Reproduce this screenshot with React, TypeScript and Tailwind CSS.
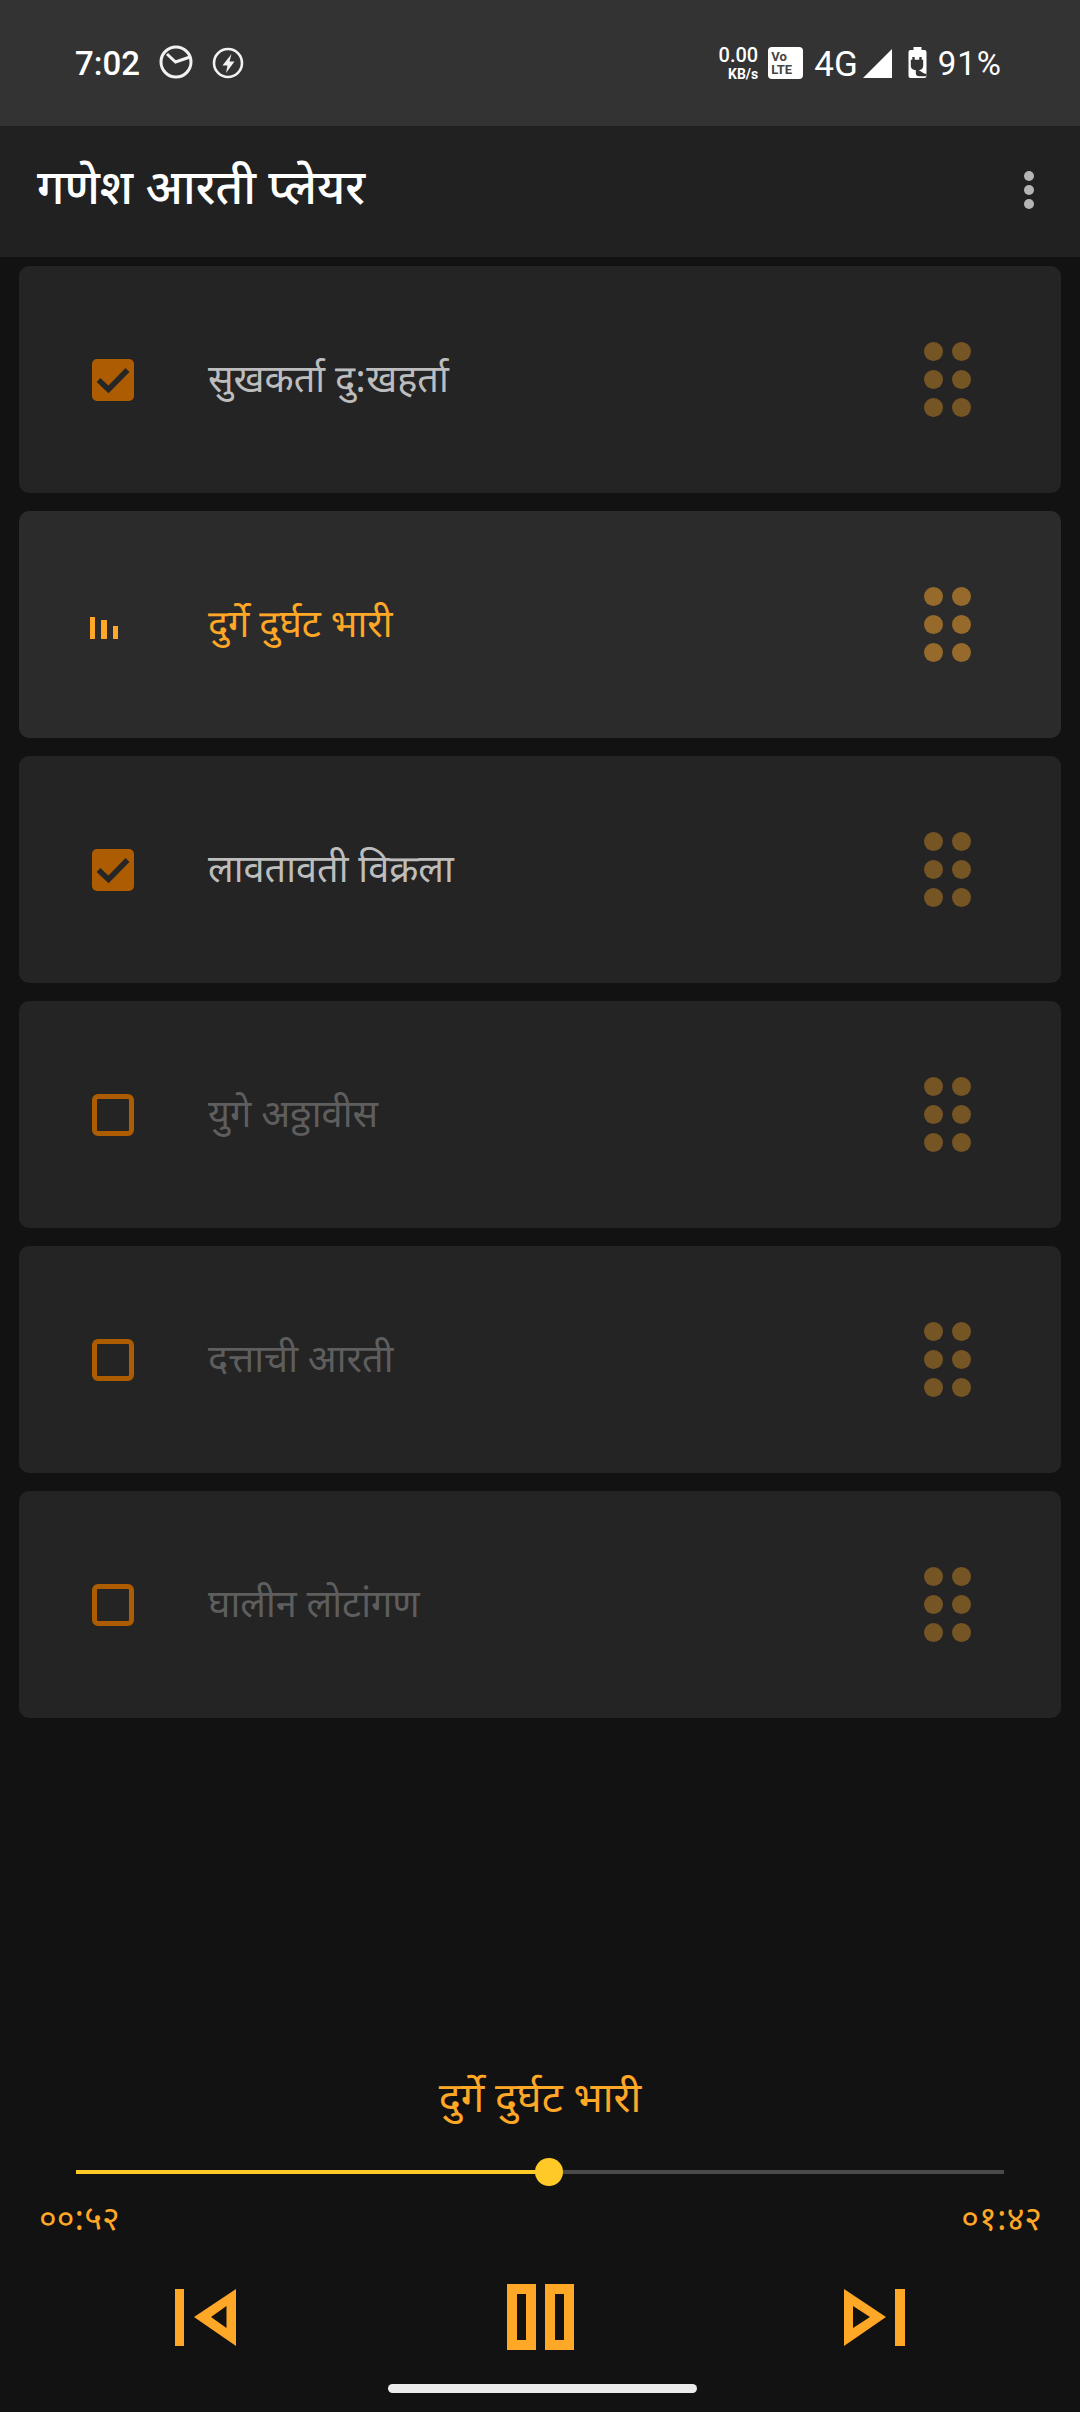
import React from "react";

const DEV = "font-['Noto_Sans_Devanagari','Noto_Sans','Roboto',sans-serif]";

const songs = [
  { name: "सुखकर्ता दु:खहर्ता", state: "done" },
  { name: "दुर्गे दुर्घट भारी", state: "playing" },
  { name: "लावतावती विक्रला", state: "done" },
  { name: "युगे अठ्ठावीस", state: "todo" },
  { name: "दत्ताची आरती", state: "todo" },
  { name: "घालीन लोटांगण", state: "todo" },
];

function Grip({ active }: { active: boolean }) {
  return (
    <div className="grid grid-cols-2 gap-x-[9px] gap-y-[9px] w-[47px] mr-[90px]">
      {[0, 1, 2, 3, 4, 5].map((i) => (
        <div key={i} className={`w-[19px] h-[19px] rounded-full ${active ? "bg-[#966A2B]" : "bg-[#765524]"}`} />
      ))}
    </div>
  );
}

function Lead({ state }: { state: string }) {
  if (state === "playing") {
    return (
      <div className="w-[42px] h-[42px] flex items-end gap-[6px] -ml-[2px] mr-[2px] mt-[4px]">
        <div className="w-[5px] h-[22px] bg-[#FFA726] mb-[9px]" />
        <div className="w-[6px] h-[19px] bg-[#FFA726] mb-[9px]" />
        <div className="w-[5px] h-[13px] bg-[#FFA726] mb-[9px]" />
      </div>
    );
  }
  if (state === "done") {
    return (
      <div className="w-[42px] h-[42px] rounded-[5px] bg-[#AD5C02] flex items-center justify-center">
        <svg width="34" height="28" viewBox="0 0 34 28" fill="none">
          <path d="M2.5 14 L12.5 23.5 L31.5 4" stroke="#262626" strokeWidth="5.5" />
        </svg>
      </div>
    );
  }
  return <div className="w-[42px] h-[42px] rounded-[6px] border-[5px] border-[#AD5C02]" />;
}

function Row({ name, state }: { name: string; state: string }) {
  const playing = state === "playing";
  const color = playing ? "text-[#FFA726]" : state === "done" ? "text-[#BDBDBD]" : "text-[#5E5E5E]";
  return (
    <div className={`h-[227px] rounded-[10px] flex items-center pl-[73px] shrink-0 ${playing ? "bg-[#2B2B2B]" : "bg-[#242424]"}`}>
      <Lead state={state} />
      <div className={`ml-[74px] flex-1 text-[37.9px] leading-[50px] pt-[6px] ${DEV} ${color}`}>{name}</div>
      <Grip active={playing} />
    </div>
  );
}

export default function App() {
  return (
    <div className="w-[1080px] h-[2412px] bg-[#121212] flex flex-col relative overflow-hidden font-['Roboto',sans-serif]">
      {/* status bar */}
      <div className="h-[126px] shrink-0 bg-[#333333] flex items-start pt-[45px] pl-[75px] pr-[78px] text-white">
        <span className="text-[33px] leading-[36px] mt-[1px] font-medium">7:02</span>
        <svg className="ml-[19px]" width="34" height="34" viewBox="0 0 34 34" fill="none" stroke="#F2F2F2" strokeWidth="3">
          <circle cx="17" cy="17" r="15" />
          <path d="M8 9 L16.5 17 L31 12" />
        </svg>
        <svg className="ml-[19px] mt-[2px]" width="32" height="32" viewBox="0 0 32 32" fill="none">
          <circle cx="16" cy="16" r="14" stroke="#F2F2F2" strokeWidth="2.6" />
          <path d="M19.5 7 L10.5 18.5 H15.5 L14 26 L22.5 14.5 H17.5 Z" fill="#F2F2F2" />
        </svg>
        <div className="ml-auto flex items-start">
          <div className="flex flex-col items-end mr-[10px]">
            <span className="text-[20px] leading-[20px] font-medium">0.00</span>
            <span className="text-[14px] leading-[16px] font-bold mt-[1px]">KB/s</span>
          </div>
          <div className="w-[35px] h-[32px] mt-[2px] rounded-[4px] bg-white text-[#444444] text-[13px] leading-[13px] font-bold pl-[3px] pt-[3px]">
            <div>Vo</div>
            <div>LTE</div>
          </div>
          <span className="ml-[11px] mt-[1px] text-[35px] leading-[38px]">4G</span>
          <svg className="ml-[5px] mt-[4px]" width="29" height="29" viewBox="0 0 29 29">
            <path d="M29 0 V29 H0 Z" fill="#FFFFFF" />
          </svg>
          <svg className="ml-[16px] mt-[2px]" width="19" height="31" viewBox="0 0 18 31">
            <path d="M5 0 H13 V3 H16 Q18 3 18 5 V29 Q18 31 16 31 H2 Q0 31 0 29 V5 Q0 3 2 3 H5 Z" fill="#FFFFFF" />
            <path d="M5 10 V14 M12 10 V14 M3.5 14 H13.5 V19 Q13.5 22 8.5 22 Q3.5 22 3.5 19 Z M8.5 22 V26 Q8.5 28 11 28 H18" stroke="#333333" strokeWidth="2.4" fill="#333333" />
          </svg>
          <span className="ml-[11px] mt-[1px] text-[33px] leading-[36px] tracking-[1px]">91%</span>
        </div>
      </div>

      {/* app bar */}
      <div className="h-[131px] shrink-0 bg-[#212121] flex items-center pl-[37px] pr-[46px]">
        <span className={`text-[47.4px] leading-[60px] font-medium text-white pt-[3px] ${DEV}`}>गणेश आरती प्लेयर</span>
        <div className="ml-auto flex flex-col gap-[4px] -mt-[3px]">
          <div className="w-[10px] h-[10px] rounded-full bg-[#B5B5B5]" />
          <div className="w-[10px] h-[10px] rounded-full bg-[#B5B5B5]" />
          <div className="w-[10px] h-[10px] rounded-full bg-[#B5B5B5]" />
        </div>
      </div>

      {/* list */}
      <div className="flex flex-col gap-[18px] pt-[9px] px-[19px]">
        {songs.map((s) => (
          <Row key={s.name} name={s.name} state={s.state} />
        ))}
      </div>

      {/* player */}
      <div className="mt-auto flex flex-col items-center pb-[62px]">
        <div className={`text-[41.6px] leading-[54px] pt-[2px] text-[#FFA726] ${DEV}`}>दुर्गे दुर्घट भारी</div>
        <div className="mt-[41px] w-[928px] h-[4px] bg-[#4A4A4A] relative">
          <div className="h-full w-[473px] bg-[#FFCA28]" />
          <div className="absolute left-[459px] -top-[12px] w-[28px] h-[28px] rounded-full bg-[#FFCA28]" />
        </div>
        <div className={`w-full flex justify-between pl-[39px] pr-[38px] mt-[28px] text-[34px] leading-[40px] text-[#FFA726] ${DEV}`}>
          <span>००:५२</span>
          <span>०१:४२</span>
        </div>
        <div className="w-full mt-[42px] flex items-center pl-[175px] pr-[175px] justify-between">
          <svg width="61" height="57" viewBox="0 0 61 57" fill="#FFA726">
            <rect x="0" y="0" width="9" height="57" />
            <path fillRule="evenodd" d="M19 28 L61 0 V57 Z M36 28 L51.5 39 V17 Z" />
          </svg>
          <svg width="67" height="66" viewBox="0 0 67 66" fill="#FFA726">
            <path fillRule="evenodd" d="M0 0 H29 V66 H0 Z M10 10 V56 H19 V10 Z M38 0 H67 V66 H38 Z M48 10 V56 H57 V10 Z" />
          </svg>
          <svg width="61" height="57" viewBox="0 0 61 57" fill="#FFA726">
            <path fillRule="evenodd" d="M0 0 L42 28 L0 57 Z M9 17 V39 L26 28 Z" />
            <rect x="51" y="0" width="10" height="57" />
          </svg>
        </div>
      </div>

      {/* home indicator */}
      <div className="absolute left-[388px] top-[2384px] w-[309px] h-[9px] rounded-full bg-[#ECECEC]" />
    </div>
  );
}
